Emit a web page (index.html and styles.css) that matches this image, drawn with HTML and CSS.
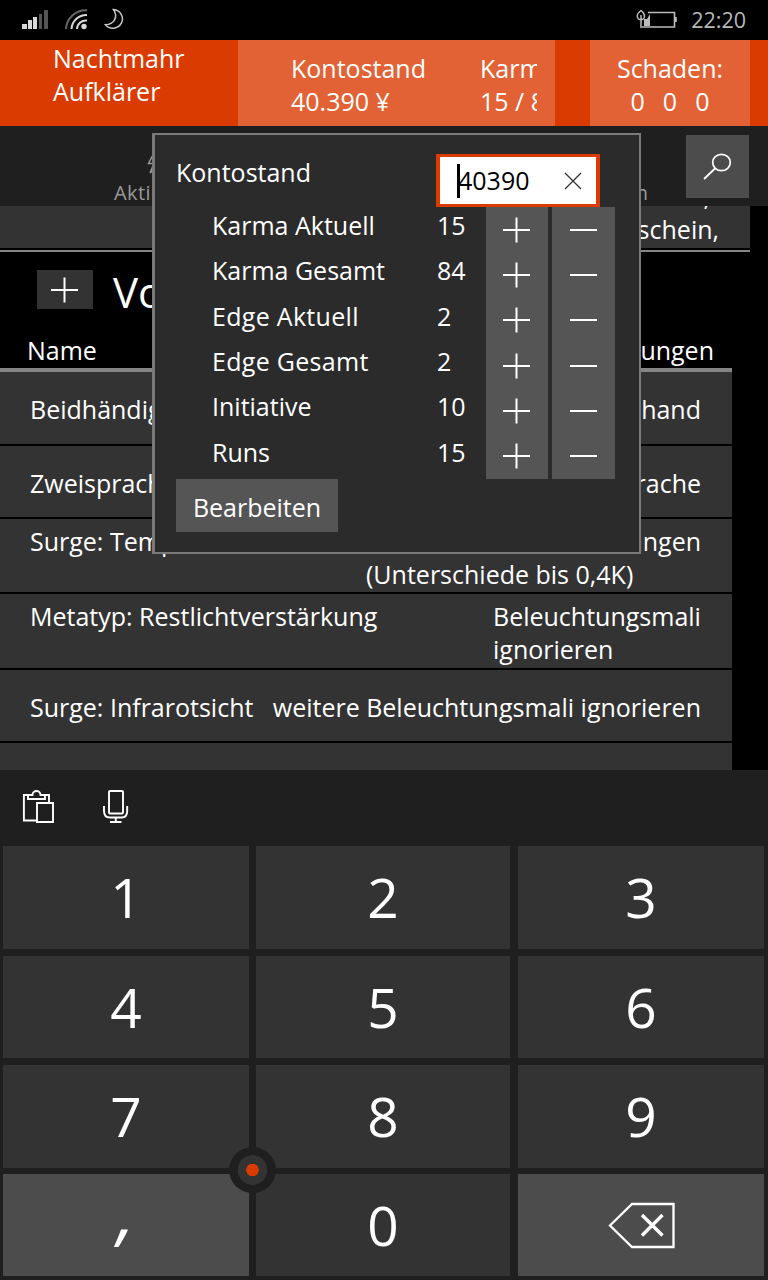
FILE: index.html
```html
<!DOCTYPE html>
<html lang="de">
<head>
<meta charset="utf-8">
<title>Nachtmahr</title>
<link rel="stylesheet" href="styles.css">
</head>
<body>
<svg class="defs" width="0" height="0">
  <symbol id="plus" viewBox="0 0 28 26"><path d="M0 13H27M13.500 0.500V25.500" fill="none" stroke="#fff" stroke-width="2"/></symbol>
  <symbol id="minus" viewBox="0 0 28 26"><path d="M0 13H27" fill="none" stroke="#fff" stroke-width="2"/></symbol>
</svg>
<div class="phone">
  <div class="status">
    <svg width="110" height="24" viewBox="20 8 110 24">
      <path d="M22 24h5v5h-5zM28 20h4v9h-4zM33 17h4v12h-4z" fill="#d8d8d8"/>
      <path d="M39 14h3v15h-3zM44 10h4v19h-4z" fill="#555"/>
      <g fill="none" stroke-width="2"><path d="M66 29A20 20 0 0 1 87 10.200" stroke="#666"/><path d="M71.500 29A15 15 0 0 1 87 15M77 29A9 9 0 0 1 87 20.500" stroke="#d8d8d8"/></g>
      <circle cx="84" cy="26.500" r="2.700" fill="#d8d8d8"/>
      <path d="M113.500 9.600A9.500 9.300 0 1 1 105.500 24.700C114 24.500 118.500 17 113.500 9.600Z" fill="none" stroke="#c8c8c8" stroke-width="1.500"/>
    </svg>
    <div class="status-right">
      <svg width="42" height="20" viewBox="636 9 42 20">
        <path d="M648 12.500H674.500V27H642M676 17v5" fill="none" stroke="#bbb" stroke-width="1.600"/>
        <path d="M644 26v-7h3l3-5v12z" fill="#bbb"/>
        <path d="M641 10.500C643 12 644.500 14 644.500 16A3.600 3.800 0 0 1 637.300 16C637.300 14 639 12 641 10.500ZM641 15v13" fill="none" stroke="#bbb" stroke-width="1.500"/>
      </svg>
      <span class="clock">22:20</span>
    </div>
  </div>

  <header class="header">
    <div class="name">Nachtmahr<br>Aufklärer</div>
    <div class="stats">
      <div class="stat">Kontostand<br>40.390 ¥</div>
      <div class="stat clip">Karma<br>15 / 84</div>
    </div>
    <div class="damage"><div>Schaden:</div><div class="zeros"><span>0</span><span>0</span><span>0</span></div></div>
  </header>

  <nav class="commands">
    <div class="command action">
      <svg width="22" height="24" viewBox="0 0 22 24"><path d="M8.500 1H18L12.500 9H19L4 22L8 12.500H2.500Z" fill="none" stroke="#999" stroke-width="1.500"/></svg>
      <span>Aktionen</span>
    </div>
    <div class="command persons"><span>Person</span></div>
    <button class="search"><svg width="30" height="28" viewBox="0 0 30 28"><ellipse cx="18.500" cy="9.500" rx="8.800" ry="8.200" fill="none" stroke="#fff" stroke-width="1.700"/><path d="M12 15.500L1 26" stroke="#fff" stroke-width="1.800"/></svg></button>
  </nav>

  <main class="content">
    <div class="previous"><span><span class="upper">Ausweis,</span><br>Waffenschein,</span></div>
    <div class="rule"></div>
    <div class="section">
      <button class="add"><svg width="28" height="26"><use href="#plus"/></svg></button>
      <h1>Vorteile</h1>
    </div>
    <div class="thead"><span>Name</span><span>Anmerkungen</span></div>
    <div class="row r1"><span>Beidhändigkeit</span><span>Nebenhand</span></div>
    <div class="row r2"><span>Zweisprachig</span><span>Muttersprache</span></div>
    <div class="row r3"><span>Surge: Temperatursinn</span><span class="note wide"><span class="end">Veränderungen</span><span>(Unterschiede bis 0,4K)</span></span></div>
    <div class="row r4"><span>Metatyp: Restlichtverstärkung</span><span class="note">Beleuchtungsmali<br>ignorieren</span></div>
    <div class="row r5"><span>Surge: Infrarotsicht</span><span>weitere Beleuchtungsmali ignorieren</span></div>
    <div class="row r6"></div>
  </main>

  <section class="keyboard">
    <div class="tools">
      <svg width="34" height="36" viewBox="22 788 34 36" fill="none" stroke="#fff" stroke-width="1.900"><path d="M36 820.500H23.900V795H32.500M40.500 795H49V802"/><path d="M28 795V799H45V795H40.500A4 4 0 0 0 32.500 795Z"/><path d="M37 803H53V822H37Z"/></svg>
      <svg width="28" height="36" viewBox="102 788 28 36" fill="none" stroke="#fff" stroke-width="1.900"><rect x="109" y="791" width="14" height="22.500" rx="1"/><path d="M104 806V811Q104 817.500 110 817.500H121.500Q127.200 817.500 127.200 811V806M115.800 817.500V822M110 822H121.500"/></svg>
    </div>
    <div class="keys">
      <div class="key">1</div><div class="key">2</div><div class="key">3</div>
      <div class="key">4</div><div class="key">5</div><div class="key">6</div>
      <div class="key">7</div><div class="key">8</div><div class="key">9</div>
      <div class="key alt comma">,</div><div class="key">0</div>
      <div class="key alt"><svg width="68" height="48" viewBox="0 0 68 48" fill="none" stroke="#fff"><path d="M2 23.500L24 2H65.500V45H24Z" stroke-width="2.300"/><path d="M34 13L54.500 33.500M54.500 13L34 33.500" stroke-width="3.400"/></svg></div>
    </div>
    <div class="nub"></div>
  </section>

  <section class="flyout">
    <div class="account"><span>Kontostand</span><div class="field"><span class="caret"></span><span class="value">40390</span><svg width="18" height="18"><path d="M1 1L17 17M17 1L1 17" stroke="#333" stroke-width="1.300"/></svg></div></div>
    <div class="counters">
      <div class="counter"><span>Karma Aktuell</span><span>15</span><button><svg width="28" height="26"><use href="#plus"/></svg></button><button><svg width="28" height="26"><use href="#minus"/></svg></button></div>
      <div class="counter"><span>Karma Gesamt</span><span>84</span><button><svg width="28" height="26"><use href="#plus"/></svg></button><button><svg width="28" height="26"><use href="#minus"/></svg></button></div>
      <div class="counter edge"><span>Edge Aktuell</span><span>2</span><button><svg width="28" height="26"><use href="#plus"/></svg></button><button><svg width="28" height="26"><use href="#minus"/></svg></button></div>
      <div class="counter edge"><span>Edge Gesamt</span><span>2</span><button><svg width="28" height="26"><use href="#plus"/></svg></button><button><svg width="28" height="26"><use href="#minus"/></svg></button></div>
      <div class="counter"><span>Initiative</span><span>10</span><button><svg width="28" height="26"><use href="#plus"/></svg></button><button><svg width="28" height="26"><use href="#minus"/></svg></button></div>
      <div class="counter"><span>Runs</span><span>15</span><button><svg width="28" height="26"><use href="#plus"/></svg></button><button><svg width="28" height="26"><use href="#minus"/></svg></button></div>
    </div>
    <button class="edit">Bearbeiten</button>
  </section>
</div>
</body>
</html>
```

FILE: styles.css
```css
* { box-sizing: border-box; }
body { margin: 0; background: #000; color: #fff; font: 25px/33px "Open Sans", "Noto Sans", sans-serif; }
button { border: 0; padding: 0; margin: 0; color: inherit; font: inherit; display: flex; align-items: center; justify-content: center; }
svg { display: block; flex: none; }
.defs { position: absolute; }
.phone { position: relative; width: 768px; height: 1280px; overflow: hidden; white-space: nowrap; display: flex; flex-direction: column; }

.status { height: 40px; flex: none; display: flex; justify-content: space-between; padding: 8px 22px 0 20px; }
.status-right { display: flex; gap: 13px; padding-top: 1px; }
.clock { font-size: 21.5px; line-height: 22px; color: #b8b8b8; }

.header { height: 86px; flex: none; background: #da3b01; display: flex; }
.name { width: 238px; padding: 2px 0 0 53px; }
.stats { width: 317px; background: #e26235; padding: 12px 18px 0 53px; display: flex; justify-content: space-between; }
.clip { width: 58px; overflow: hidden; padding-left: 1px; }
.damage { width: 160px; margin-left: 35px; background: #e26235; padding-top: 12px; text-align: center; }
.zeros { display: flex; justify-content: center; gap: 18px; }

.commands { height: 80px; flex: none; background: #1f1f1f; display: flex; color: #999; font-size: 20px; line-height: 24px; padding: 9px 19px 0 114px; }
.command { display: flex; flex-direction: column; justify-content: flex-end; height: 70px; }
.action { align-items: center; letter-spacing: 0.4px; }
.action svg { margin-bottom: 6px; }
.persons { margin-left: auto; margin-right: 38px; }
.search { width: 63px; height: 63px; background: #4c4c4c; }
.search svg { margin-left: 1px; }

.content { height: 564px; flex: none; overflow: hidden; }
.previous { width: 750px; height: 42px; background: #333; display: flex; justify-content: flex-end; align-items: flex-end; padding: 0 31px 2px 0; overflow: hidden; text-align: right; }
.upper { padding-right: 9px; }
.rule { width: 750px; height: 2px; margin-top: 2px; background: #858585; }
.section { height: 80px; display: flex; padding: 18px 0 0 37px; gap: 20px; }
.add { width: 56px; height: 39px; background: #333; }
h1 { margin: 0; font-size: 42px; line-height: 44px; font-weight: 400; }
.thead { width: 732px; height: 40px; padding: 2px 18px 0 27px; border-bottom: 4px solid #858585; display: flex; justify-content: space-between; }
.row { width: 732px; background: #333; padding: 0 31px 0 30px; margin-bottom: 2px; display: flex; justify-content: space-between; }
.r1 { height: 72px; padding-top: 21px; }
.r2 { height: 71px; padding-top: 21px; }
.r3 { height: 73px; padding-top: 6px; }
.r4 { height: 74px; padding-top: 6px; }
.r5 { height: 71px; padding-top: 21px; }
.r6 { height: 27px; }
.note { width: 208px; }
.wide { width: 335px; display: flex; flex-direction: column; }
.end { text-align: right; }

.keyboard { position: relative; height: 510px; flex: none; background: #1f1f1f; }
.tools { height: 76px; padding: 18px 0 0 22px; display: flex; gap: 46px; }
.keys { display: grid; grid-template-columns: 246px 254px 247px; grid-template-rows: 103px 102px 103px 101px; column-gap: 7px; row-gap: 7px; padding-left: 3px; }
.key { background: #333; font-size: 55px; line-height: 98px; display: flex; justify-content: center; padding-top: 2px; }
.key:nth-child(3n) { margin-left: 1px; }
.key:nth-child(n+10) { margin-top: -1px; }
.key svg { margin: 26px 0 0 2px; }
.alt { background: #4c4c4c; }
.comma { font-size: 72px; line-height: 68px; font-style: italic; }
.nub { position: absolute; left: 229px; top: 377px; width: 47px; height: 46px; border-radius: 50%; background: radial-gradient(circle, #da3b01 0 6px, #333 6.5px 14.5px, #1f1f1f 15px); }

.flyout { position: absolute; left: 152px; top: 133px; width: 489px; height: 421px; border: 2px solid #7a7a7a; border-left-width: 3px; background: #2b2b2b; padding: 19px 24px 0 21px; }
.account { display: flex; justify-content: space-between; height: 53px; padding-right: 15px; line-height: 37px; }
.field { width: 164px; height: 53px; border: 4px solid #da3b01; border-top-width: 3px; border-bottom-width: 3px; background: #fff; color: #000; display: flex; align-items: center; padding: 0 14px 0 17px; }
.field svg { margin-left: auto; }
.caret { width: 3px; height: 34px; background: #000; margin-right: -2px; }
.value { line-height: 33px; }
.counters { height: 272px; display: grid; grid-template-rows: repeat(6, 1fr); }
.counter { display: grid; grid-template-columns: 225px 49px 62px 67px; padding-left: 36px; }
.counter span { padding-top: 2px; line-height: 33px; }
.edge span { letter-spacing: 0.3px; }
.counter button { background: #555; }
.counter button:nth-child(4) { margin-left: 4px; width: 63px; }
.edit { width: 162px; height: 53px; background: #555; padding-top: 4px; }
```
